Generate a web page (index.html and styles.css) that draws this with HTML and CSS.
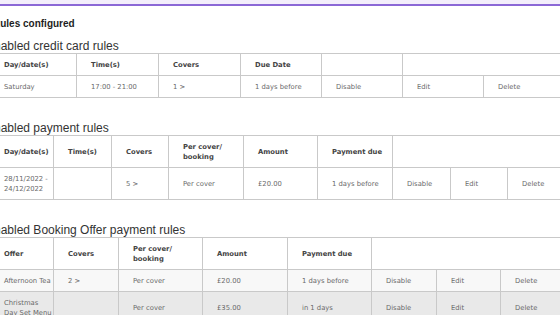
FILE: index.html
```html
<!DOCTYPE html>
<html lang="en">
<head>
    <meta charset="UTF-8">
    <meta name="viewport" content="width=device-width, initial-scale=1.0">
    <title>Rules configured</title>
    <link rel="stylesheet" href="styles.css">
</head>

<body>
    <div class="top-bar"></div>

    <div class="page">
        <h2 class="page-title">Rules configured</h2>

        <h3 class="section-title">Enabled credit card rules</h3>
        <table class="rules">
            <colgroup>
                <col style="width: 87px"><col style="width: 82px"><col style="width: 82px">
                <col style="width: 81px"><col style="width: 81px"><col style="width: 81px"><col style="width: 81px">
            </colgroup>
            <tr>
                <th>Day/date(s)</th>
                <th>Time(s)</th>
                <th>Covers</th>
                <th>Due Date</th>
                <th></th>
                <th colspan="2"></th>
            </tr>
            <tr>
                <td>Saturday</td>
                <td>17:00 - 21:00</td>
                <td>1 &gt;</td>
                <td>1 days before</td>
                <td>Disable</td>
                <td>Edit</td>
                <td>Delete</td>
            </tr>
        </table>

        <h3 class="section-title">Enabled payment rules</h3>
        <table class="rules">
            <colgroup>
                <col style="width: 64px"><col style="width: 58px"><col style="width: 57px">
                <col style="width: 75px"><col style="width: 74px"><col style="width: 75px">
                <col style="width: 58px"><col style="width: 57px"><col style="width: 57px">
            </colgroup>
            <tr>
                <th>Day/date(s)</th>
                <th>Time(s)</th>
                <th>Covers</th>
                <th>Per cover/<br>booking</th>
                <th>Amount</th>
                <th>Payment due</th>
                <th colspan="3"></th>
            </tr>
            <tr>
                <td>28/11/2022 -<br>24/12/2022</td>
                <td></td>
                <td>5 &gt;</td>
                <td>Per cover</td>
                <td>£20.00</td>
                <td>1 days before</td>
                <td>Disable</td>
                <td>Edit</td>
                <td>Delete</td>
            </tr>
        </table>

        <h3 class="section-title">Enabled Booking Offer payment rules</h3>
        <table class="rules offers">
            <colgroup>
                <col style="width: 64px"><col style="width: 65px"><col style="width: 84px">
                <col style="width: 85px"><col style="width: 84px"><col style="width: 65px">
                <col style="width: 64px"><col style="width: 64px">
            </colgroup>
            <tr>
                <th>Offer</th>
                <th>Covers</th>
                <th>Per cover/<br>booking</th>
                <th>Amount</th>
                <th>Payment due</th>
                <th colspan="3"></th>
            </tr>
            <tr>
                <td>Afternoon Tea</td>
                <td>2 &gt;</td>
                <td>Per cover</td>
                <td>£20.00</td>
                <td>1 days before</td>
                <td>Disable</td>
                <td>Edit</td>
                <td>Delete</td>
            </tr>
            <tr>
                <td>Christmas<br>Day Set Menu</td>
                <td></td>
                <td>Per cover</td>
                <td>£35.00</td>
                <td>in 1 days</td>
                <td>Disable</td>
                <td>Edit</td>
                <td>Delete</td>
            </tr>
        </table>
    </div>
</body>
</html>
```

FILE: styles.css
```css
body {
    margin: 0;
    background: #ffffff;
    font-family: 'Liberation Sans', Arial, sans-serif;
    color: #222;
    overflow: hidden;
}

.top-bar {
    height: 4px;
    background: #f3eefb;
    border-bottom: 2px solid #8b68d6;
}

.page {
    margin-left: -11px;
}

.page-title {
    font-size: 10px;
    font-weight: bold;
    line-height: 14px;
    margin: 11px 0 0 4px;
    color: #1e1e1e;
}

.section-title {
    font-size: 12px;
    font-weight: normal;
    line-height: 14px;
    margin: 8px 0 0 -3px;
    color: #333;
}

.rules + .section-title {
    margin-top: 23px;
}

.rules {
    border-collapse: collapse;
    table-layout: fixed;
    width: 575px;
    font-family: 'DejaVu Sans', Verdana, sans-serif;
    font-size: 6.8px;
    line-height: 10px;
}

.rules th,
.rules td {
    border: 1px solid #c9c9c9;
    padding: 6px 3px 5px 14px;
    text-align: left;
    vertical-align: middle;
    white-space: nowrap;
}

.rules th {
    color: #444;
    font-weight: bold;
}

.rules td {
    color: #6a6a6a;
}

.offers tr:nth-child(2) td {
    background: #f8f8f8;
}

.offers tr:nth-child(3) td {
    background: #e9e9e9;
}
```
